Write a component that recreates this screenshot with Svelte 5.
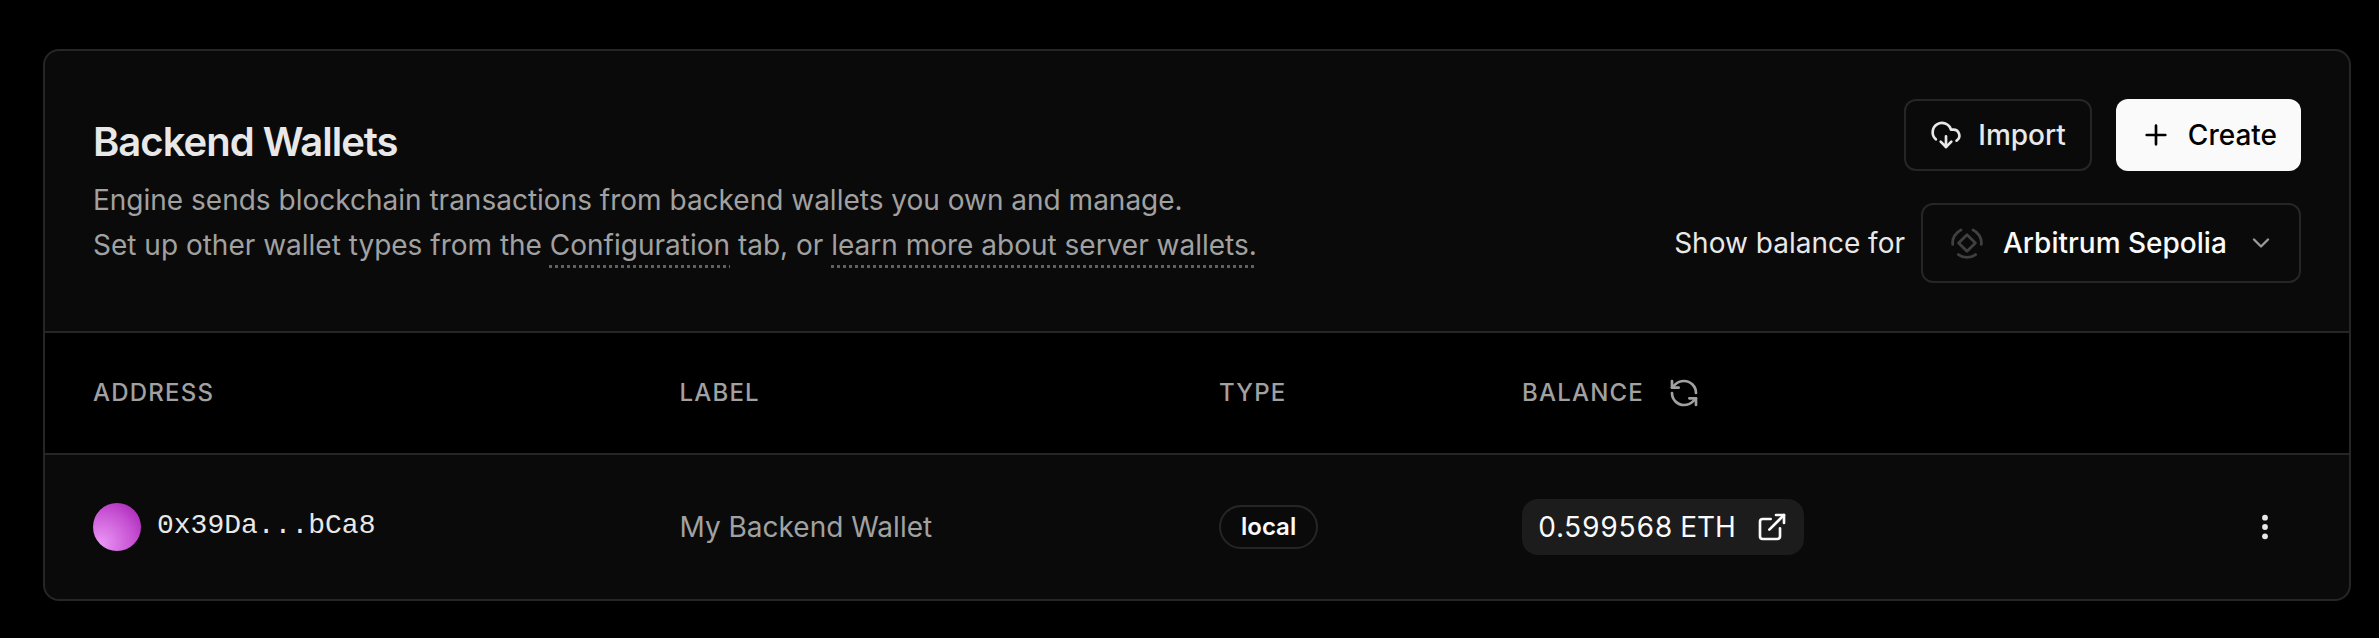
<script>
  const columns = ['Address', 'Label', 'Type', 'Balance'];
  const wallets = [
    { address: '0x39Da...bCa8', label: 'My Backend Wallet', type: 'local', balance: '0.599568 ETH' },
  ];
</script>

<main>
  <section class="card">
    <header>
      <div class="intro">
        <h2>Backend Wallets</h2>
        <p>
          Engine sends blockchain transactions from backend wallets you own and manage.<br />
          Set up other wallet types from the <a href="#configuration">Configuration</a> tab, or <a href="#learn">learn more about server wallets.</a>
        </p>
      </div>
      <div class="actions">
        <div class="buttons">
          <button class="btn outline">
            <svg class="icon" width="32" height="32" viewBox="0 0 24 24">
              <path d="M12 13v8l-4-4" /><path d="m12 21 4-4" />
              <path d="M4.393 15.269A7 7 0 1 1 15.71 8h1.79a4.5 4.5 0 0 1 2.436 8.284" />
            </svg>
            Import
          </button>
          <button class="btn primary">
            <svg class="icon" width="32" height="32" viewBox="0 0 24 24"><path d="M5 12h14M12 5v14" /></svg>
            Create
          </button>
        </div>
        <div class="balance-for">
          <span>Show balance for</span>
          <button class="select">
            <svg class="chain" width="32" height="32" viewBox="0 0 32 32">
              <path d="M16 7.7 24.4 16 16 24.3 7.6 16Z" />
              <path d="M9.9 2.9A14.4 14.4 0 0 0 1.7 17.3M22.1 2.9A14.4 14.4 0 0 1 30.3 17.3M7.4 27.6a14.4 14.4 0 0 0 17.2 0" />
            </svg>
            <span class="name">Arbitrum Sepolia</span>
            <svg class="icon chevron" width="28" height="28" viewBox="0 0 24 24"><path d="m6 9 6 6 6-6" /></svg>
          </button>
        </div>
      </div>
    </header>

    <div class="row head">
      {#each columns as column}
        <div class="cell">
          {column}
          {#if column === 'Balance'}
            <svg class="icon refresh" width="32" height="32" viewBox="0 0 24 24">
              <path d="M21 12a9 9 0 0 0-9-9 9.75 9.75 0 0 0-6.74 2.74L3 8" /><path d="M3 3v5h5" />
              <path d="M3 12a9 9 0 0 0 9 9 9.75 9.75 0 0 0 6.74-2.74L21 16" /><path d="M16 16h5v5" />
            </svg>
          {/if}
        </div>
      {/each}
      <div></div>
    </div>

    {#each wallets as wallet}
      <div class="row body">
        <div class="cell">
          <span class="avatar"></span>
          <span class="address">{wallet.address}</span>
        </div>
        <div class="cell muted">{wallet.label}</div>
        <div class="cell"><span class="badge">{wallet.type}</span></div>
        <div class="cell">
          <span class="amount">
            {wallet.balance}
            <svg class="icon" width="32" height="32" viewBox="0 0 24 24">
              <path d="M15 3h6v6" /><path d="M10 14 21 3" />
              <path d="M18 13v6a2 2 0 0 1-2 2H5a2 2 0 0 1-2-2V8a2 2 0 0 1 2-2h6" />
            </svg>
          </span>
        </div>
        <div class="cell menu">
          <svg width="32" height="32" viewBox="0 0 32 32" fill="currentColor">
            <circle cx="16" cy="6.7" r="2.9" /><circle cx="16" cy="16" r="2.9" /><circle cx="16" cy="25.3" r="2.9" />
          </svg>
        </div>
      </div>
    {/each}
  </section>
</main>

<style>
  :global(body) {
    margin: 0;
    background: #000;
  }
  main {
    box-sizing: border-box;
    height: 638px;
    padding: 49px 28px 37px 43px;
    background: #000;
    color: #e8e8e8;
    font: 400 28px/40px Inter, sans-serif;
  }
  .card {
    box-sizing: border-box;
    height: 552px;
    border: 2px solid #262626;
    border-radius: 16px;
    overflow: hidden;
    background: #0a0a0a;
  }
  header {
    box-sizing: border-box;
    display: flex;
    justify-content: space-between;
    align-items: center;
    height: 282px;
    padding: 48px;
    border-bottom: 2px solid #262626;
  }
  h2 {
    margin: 0 0 8px;
    font-size: 40px;
    font-weight: 600;
    line-height: 56px;
    letter-spacing: -1px;
  }
  p {
    margin: 0;
    color: #a1a1a1;
    line-height: 45.5px;
  }
  a {
    color: inherit;
    text-decoration: underline dotted #606060 3px;
    text-underline-offset: 10px;
  }
  .actions {
    display: flex;
    flex-direction: column;
    align-items: flex-end;
    gap: 32px;
  }
  .buttons {
    display: flex;
    gap: 24px;
  }
  button {
    box-sizing: border-box;
    display: flex;
    align-items: center;
    border: 2px solid #262626;
    border-radius: 12px;
    background: transparent;
    color: inherit;
    font: inherit;
    font-weight: 500;
  }
  .btn {
    height: 72px;
    gap: 16px;
    padding: 0 24px;
  }
  .primary {
    border: 0;
    background: #fafafa;
    color: #000;
  }
  .icon {
    flex: none;
    fill: none;
    stroke: currentColor;
    stroke-width: 2;
    stroke-linecap: round;
    stroke-linejoin: round;
  }
  .balance-for {
    display: flex;
    align-items: center;
    gap: 16px;
  }
  .select {
    width: 380px;
    height: 80px;
    padding: 0 24px 0 28px;
    color: #fafafa;
  }
  .chain {
    flex: none;
    margin-right: 20px;
    fill: none;
    stroke: #404040;
    stroke-width: 2.8;
    stroke-linecap: round;
    stroke-linejoin: round;
  }
  .chevron {
    margin-left: auto;
    opacity: 0.6;
  }
  .row {
    display: grid;
    grid-template-columns: 586.5px 539.5px 303px 1fr 72px;
    padding: 0 48px;
  }
  .head {
    height: 120px;
    border-bottom: 2px solid #262626;
    background: #000;
    color: #a1a1a1;
    font-size: 24px;
    font-weight: 500;
    letter-spacing: 1.2px;
    text-transform: uppercase;
  }
  .body {
    height: 144px;
  }
  .cell {
    display: flex;
    align-items: center;
  }
  .refresh {
    margin-left: 24px;
  }
  .avatar {
    width: 48px;
    height: 48px;
    margin-right: 16px;
    border-radius: 50%;
    background: radial-gradient(ellipse at 15% 85%, #eb96f5, #c956d5 55%, #aa28b8 90%);
  }
  .address {
    padding-bottom: 3px;
    font-family: "Liberation Mono", monospace;
  }
  .muted {
    color: #a1a1a1;
  }
  .badge {
    box-sizing: border-box;
    height: 44px;
    padding: 0 20px;
    border: 2px solid #262626;
    border-radius: 22px;
    color: #fafafa;
    font-size: 24px;
    font-weight: 600;
    line-height: 40px;
  }
  .amount {
    display: flex;
    align-items: center;
    gap: 20px;
    height: 56px;
    padding: 0 16px;
    border-radius: 16px;
    background: #1c1c1c;
    color: #fafafa;
    font-variant-numeric: tabular-nums;
  }
  .menu {
    justify-content: center;
  }
</style>
